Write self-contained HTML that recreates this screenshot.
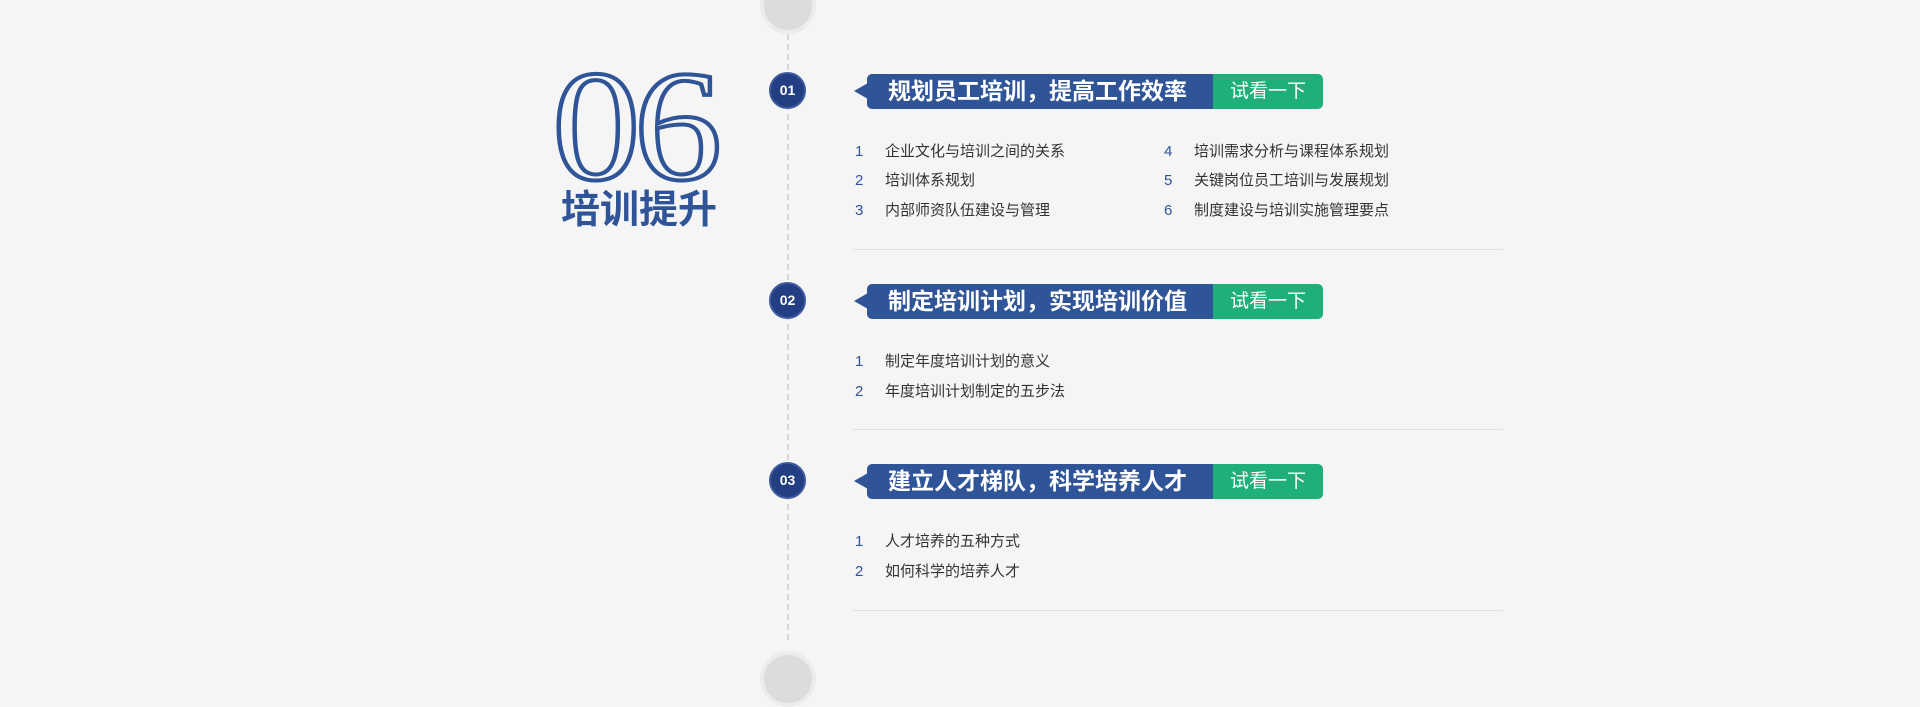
<!DOCTYPE html>
<html><head><meta charset="utf-8">
<style>
*{margin:0;padding:0;box-sizing:border-box}
body{width:1920px;height:681px;background:#f5f5f5;position:relative;overflow:hidden;font-family:"Liberation Sans","Noto Sans CJK SC",sans-serif}
.abs{position:absolute}
.line{left:787px;top:34px;height:606px;width:0;border-left:2px dashed #d6d6d6}
.gc{width:56px;height:56px;border-radius:50%;background:#dcdcdc;border:4px solid #ececec;left:760px}
.badge{left:769px;width:37px;height:37px;border-radius:50%;background:#233e83;border:2px solid #3d5a9e;color:#fff;font-weight:bold;font-size:14px;text-align:center;line-height:33px}
.ban{left:867px;height:35px;width:456px;border-radius:5px;overflow:hidden;display:flex}
.ban .t{width:346px;background:#2f5497;color:#fff;font-weight:bold;font-size:23px;line-height:35px;padding-left:21px;white-space:nowrap}
.ban .g{width:110px;background:#1fb07a;color:#fff;font-size:19px;line-height:35px;text-align:center}
.tip{left:854px;width:0;height:0;border-top:8px solid transparent;border-bottom:8px solid transparent;border-right:14px solid #2f5497}
.it{font-size:15px;color:#333;white-space:nowrap}
.it b{display:inline-block;width:30px;color:#2f5497;font-weight:normal}
.hr{left:853px;width:650px;height:1px;background:#e0e0e0}
.num{left:552px;top:48px;font-family:"Liberation Serif",serif;font-size:158px;color:transparent;-webkit-text-stroke:4px #2f5497;letter-spacing:-6px;line-height:158px;transform:scaleX(1.12);transform-origin:left top}
.h{left:561px;top:179px;font-size:39px;font-weight:bold;color:#2f5497}
</style></head><body>
<div class="abs line"></div>
<div class="abs gc" style="top:-22px"></div>
<div class="abs gc" style="top:651px"></div>
<div class="abs num">06</div>
<div class="abs h">培训提升</div>

<div class="abs badge" style="top:72px">01</div>
<div class="abs tip" style="top:83px"></div>
<div class="abs ban" style="top:74px"><div class="t">规划员工培训，提高工作效率</div><div class="g">试看一下</div></div>
<div class="abs it" style="left:855px;top:140px"><b>1</b>企业文化与培训之间的关系</div>
<div class="abs it" style="left:855px;top:169px"><b>2</b>培训体系规划</div>
<div class="abs it" style="left:855px;top:199px"><b>3</b>内部师资队伍建设与管理</div>
<div class="abs it" style="left:1164px;top:140px"><b>4</b>培训需求分析与课程体系规划</div>
<div class="abs it" style="left:1164px;top:169px"><b>5</b>关键岗位员工培训与发展规划</div>
<div class="abs it" style="left:1164px;top:199px"><b>6</b>制度建设与培训实施管理要点</div>
<div class="abs hr" style="top:249px"></div>

<div class="abs badge" style="top:282px">02</div>
<div class="abs tip" style="top:293px"></div>
<div class="abs ban" style="top:284px"><div class="t">制定培训计划，实现培训价值</div><div class="g">试看一下</div></div>
<div class="abs it" style="left:855px;top:350px"><b>1</b>制定年度培训计划的意义</div>
<div class="abs it" style="left:855px;top:380px"><b>2</b>年度培训计划制定的五步法</div>
<div class="abs hr" style="top:429px"></div>

<div class="abs badge" style="top:462px">03</div>
<div class="abs tip" style="top:473px"></div>
<div class="abs ban" style="top:464px"><div class="t">建立人才梯队，科学培养人才</div><div class="g">试看一下</div></div>
<div class="abs it" style="left:855px;top:530px"><b>1</b>人才培养的五种方式</div>
<div class="abs it" style="left:855px;top:560px"><b>2</b>如何科学的培养人才</div>
<div class="abs hr" style="top:610px"></div>
</body></html>
